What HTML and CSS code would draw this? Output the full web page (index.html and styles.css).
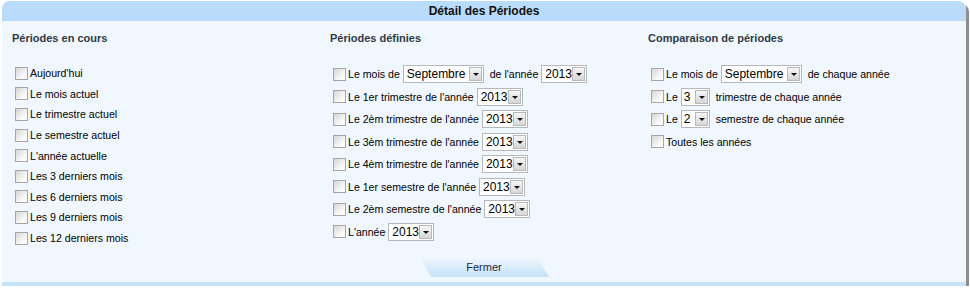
FILE: index.html
```html
<!DOCTYPE html>
<html lang="fr">
<head>
  <meta charset="UTF-8">
  <title>Détail des Périodes</title>
  <link rel="stylesheet" href="styles.css">
</head>
<body>
  <div class="panel">
    <div class="head">Détail des Périodes</div>

    <div class="cols">
      <div class="col">
        <h3>Périodes en cours</h3>
        <div class="list short">
          <label class="row"><span class="cb"></span>Aujourd'hui</label>
          <label class="row"><span class="cb"></span>Le mois actuel</label>
          <label class="row"><span class="cb"></span>Le trimestre actuel</label>
          <label class="row"><span class="cb"></span>Le semestre actuel</label>
          <label class="row"><span class="cb"></span>L'année actuelle</label>
          <label class="row"><span class="cb"></span>Les 3 derniers mois</label>
          <label class="row"><span class="cb"></span>Les 6 derniers mois</label>
          <label class="row"><span class="cb"></span>Les 9 derniers mois</label>
          <label class="row"><span class="cb"></span>Les 12 derniers mois</label>
        </div>
      </div>

      <div class="col">
        <h3>Périodes définies</h3>
        <div class="list">
          <div class="row"><span class="cb"></span>Le mois de <span class="sel month">Septembre<i></i></span> de l'année <span class="sel year">2013<i></i></span></div>
          <div class="row"><span class="cb"></span>Le 1er trimestre de l'année <span class="sel year">2013<i></i></span></div>
          <div class="row"><span class="cb"></span>Le 2èm trimestre de l'année <span class="sel year">2013<i></i></span></div>
          <div class="row"><span class="cb"></span>Le 3èm trimestre de l'année <span class="sel year">2013<i></i></span></div>
          <div class="row"><span class="cb"></span>Le 4èm trimestre de l'année <span class="sel year">2013<i></i></span></div>
          <div class="row"><span class="cb"></span>Le 1er semestre de l'année <span class="sel year">2013<i></i></span></div>
          <div class="row"><span class="cb"></span>Le 2èm semestre de l'année <span class="sel year">2013<i></i></span></div>
          <div class="row"><span class="cb"></span>L'année <span class="sel year">2013<i></i></span></div>
        </div>
      </div>

      <div class="col">
        <h3>Comparaison de périodes</h3>
        <div class="list">
          <div class="row"><span class="cb"></span>Le mois de <span class="sel month">Septembre<i></i></span> de chaque année</div>
          <div class="row"><span class="cb"></span>Le <span class="sel num">3<i></i></span> trimestre de chaque année</div>
          <div class="row"><span class="cb"></span>Le <span class="sel num">2<i></i></span> semestre de chaque année</div>
          <div class="row"><span class="cb"></span>Toutes les années</div>
        </div>
      </div>
    </div>

    <div class="foot">
      <button class="close">Fermer</button>
    </div>
  </div>
</body>
</html>
```

FILE: styles.css
```css
body {
  margin: 0;
  padding: 1px 0 0 2px;
  background: #fff;
  font-family: "Liberation Sans", Arial, sans-serif;
  font-size: 11px;
  color: #000;
}
.panel {
  width: 964px;
  height: 281px;
  background: #f0f7ff;
  border-radius: 8px 8px 0 0;
  border-bottom: 4px solid #c6e2f9;
  box-shadow: 3px 3px 0 #8e8e8e;
  display: flex;
  flex-direction: column;
}
.head {
  height: 20px;
  line-height: 21px;
  background: #b9dcfa;
  border-radius: 8px 8px 0 0;
  text-align: center;
  font-weight: bold;
  font-size: 12px;
  color: #111;
}
.cols {
  display: grid;
  grid-template-columns: 318px 318px 1fr;
  padding: 10px 0 0 10px;
  flex: 1;
}
h3 {
  margin: 0 0 18px;
  font-size: 11px;
  line-height: 14px;
  color: #2f3b46;
}
.list {
  display: flex;
  flex-direction: column;
  padding-left: 3px;
}
.row {
  display: flex;
  align-items: center;
  height: 22.5px;
  white-space: pre;
  font-size: 10.6px;
}
.short .row {
  height: 20.6px;
}
.cb {
  width: 11px;
  height: 11px;
  border: 1px solid #a6a6a6;
  background: linear-gradient(135deg, #d6d6d6, #fcfcfc 75%);
  margin-right: 2px;
  flex: none;
}
.sel {
  display: inline-flex;
  align-items: center;
  height: 18px;
  margin-right: 3px;
  padding-left: 3px;
  border: 1px solid #b4b8bc;
  box-sizing: border-box;
  background: #fff;
  font-size: 12px;
}
.sel i {
  width: 13px;
  height: 14px;
  margin-left: auto;
  margin-right: 1px;
  border: 1px solid #b9b9b9;
  box-sizing: border-box;
  background: linear-gradient(#f6f6f6, #d6d6d6);
  position: relative;
}
.sel i::after {
  content: "";
  position: absolute;
  left: 3px;
  top: 5px;
  border-left: 3px solid transparent;
  border-right: 3px solid transparent;
  border-top: 3px solid #111;
}
.month { width: 81px; }
.year { width: 46px; }
.num { width: 29px; padding-left: 2px; }
.foot {
  display: flex;
  justify-content: center;
  padding: 0 0 5px 0;
}
.close {
  position: relative;
  z-index: 0;
  width: 118px;
  height: 21px;
  border: 0;
  padding: 0;
  background: none;
  font-family: inherit;
  font-size: 11px;
  color: #1d2a3a;
}
.close::before {
  content: "";
  position: absolute;
  inset: 0;
  z-index: -1;
  transform: skewX(30deg);
  background: linear-gradient(#f3f9fe, #c5e1f8);
}
```
